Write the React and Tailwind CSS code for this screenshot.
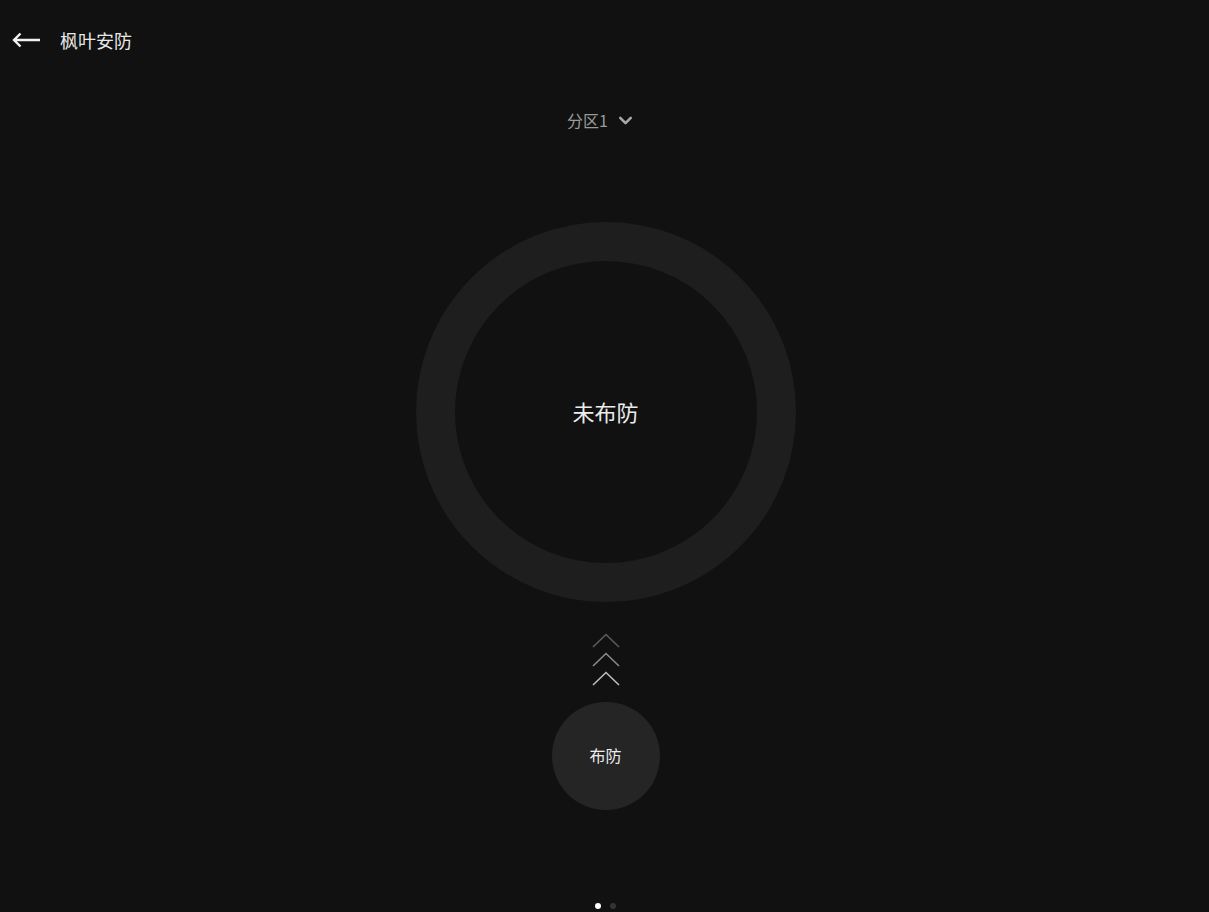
import { ChevronDown } from 'lucide-react';

const font = { fontFamily: '"Noto Sans CJK SC", "Noto Sans", sans-serif' };

const Chevron = ({ color }) => (
  <svg width="28" height="15" viewBox="0 0 28 15" fill="none">
    <path d="M1 14 L14 1.5 L27 14" stroke={color} strokeWidth="1.6" />
  </svg>
);

const App = () => {
  return (
    <div className="w-[1209px] h-[912px] bg-[#111111] text-[#e6e6e6] flex flex-col overflow-hidden" style={font}>
      {/* Header */}
      <div className="h-[82px] flex items-center pl-[12px] gap-[19px] pb-[2px]">
        <svg width="29" height="16" viewBox="0 0 29 16" fill="none">
          <path d="M28 8 H2.5 M8.5 1.5 L2 8 L8.5 14.5" stroke="#f2f2f2" strokeWidth="2.4" />
        </svg>
        <span className="text-[18px] text-[#e8e8e8]">枫叶安防</span>
      </div>

      {/* Zone selector */}
      <div className="flex justify-center items-center gap-[7px] h-[40px] mt-[18px] mr-[6px] text-[#9a9a9a]">
        <span className="text-[16px]">分区1</span>
        <ChevronDown size={21} strokeWidth={3} className="text-[#a8a8a8] mt-[1px]" />
      </div>

      {/* Status ring */}
      <div className="flex justify-center mt-[82px] ml-[2px]">
        <div className="w-[380px] h-[380px] rounded-full border-[39px] border-[#1e1e1e] flex items-center justify-center">
          <span className="text-[22px] text-[#ececec] mb-[2px]">未布防</span>
        </div>
      </div>

      {/* Swipe hint */}
      <div className="flex flex-col items-center mt-[31px] gap-[4px] ml-[2px]">
        <Chevron color="#5c5c5c" />
        <Chevron color="#8a8a8a" />
        <Chevron color="#bdbdbd" />
      </div>

      {/* Arm button */}
      <div className="flex justify-center mt-[16px] ml-[2px]">
        <button className="w-[108px] h-[108px] rounded-full bg-[#252525] flex items-center justify-center text-[16px] text-[#ececec] pb-[2px]">
          布防
        </button>
      </div>

      {/* Pager dots */}
      <div className="flex justify-center gap-[9px] mt-[93px] ml-[2px]">
        <span className="w-[6px] h-[6px] rounded-full bg-white" />
        <span className="w-[6px] h-[6px] rounded-full bg-[#333333]" />
      </div>
    </div>
  );
};

export default App;
